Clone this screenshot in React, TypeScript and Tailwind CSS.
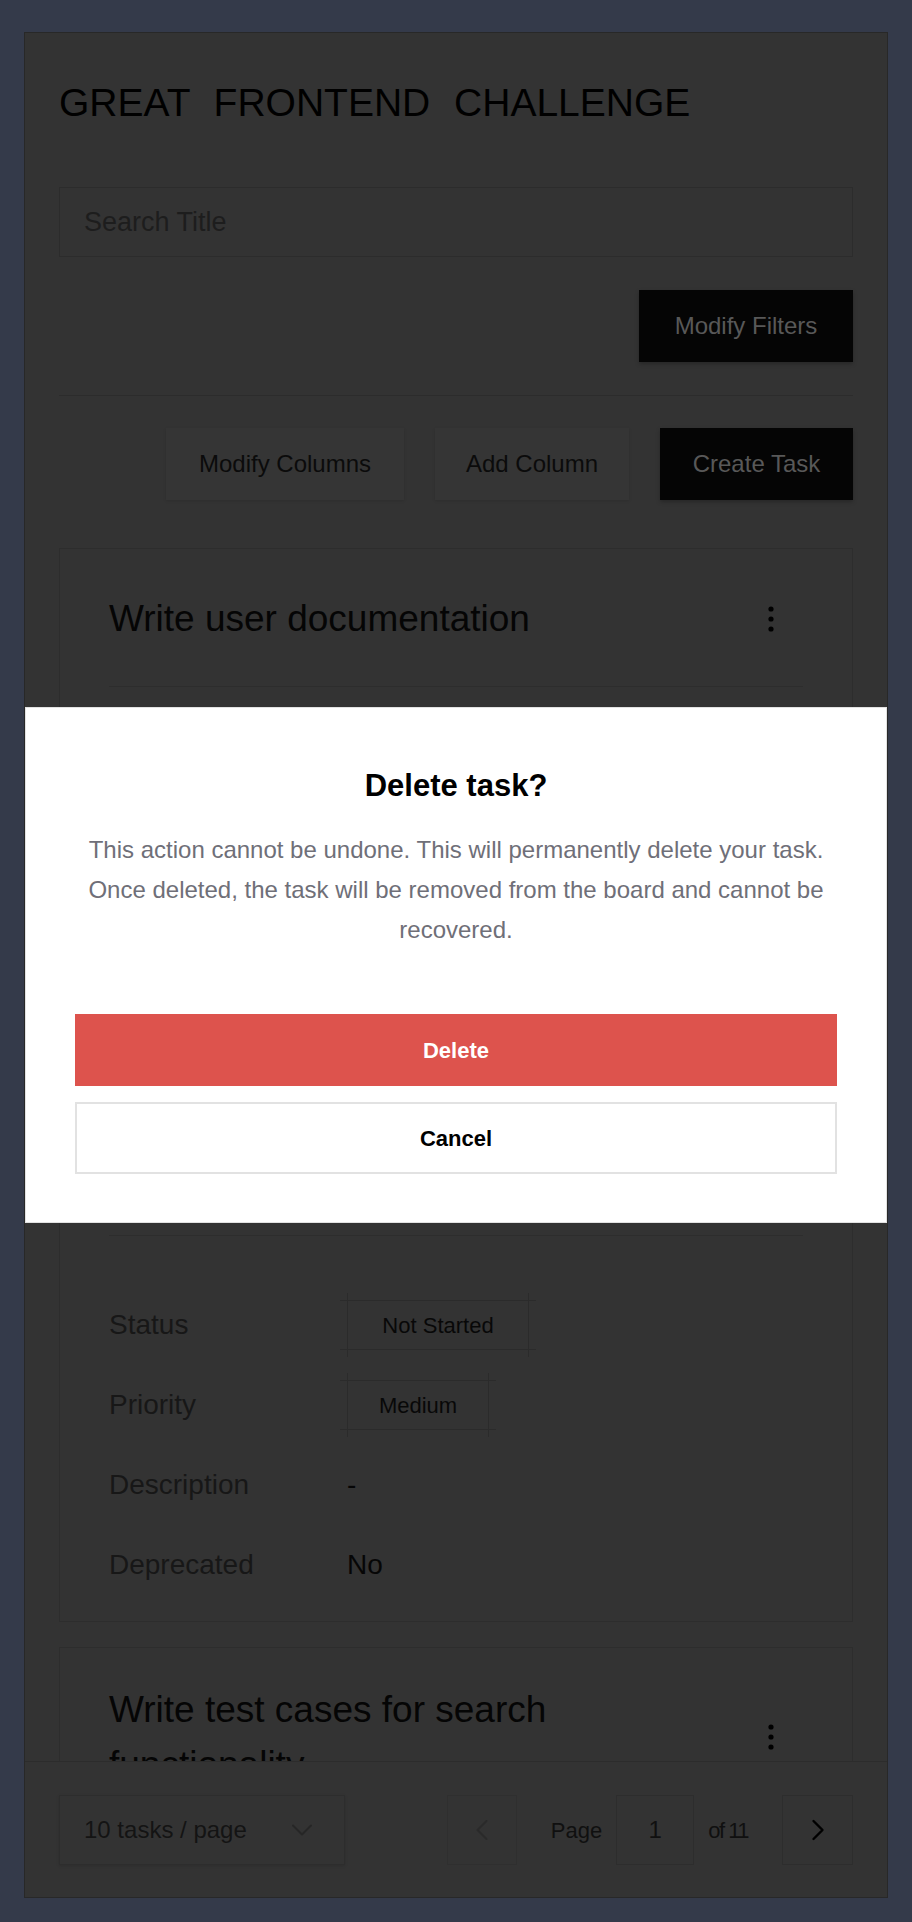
import React from "react";

const FONT = "font-['Liberation_Sans',Arial,sans-serif]";

function Dots() {
  return (
    <svg width="10" height="30" viewBox="0 0 10 30" aria-hidden="true">
      <circle cx="5" cy="5" r="2.6" fill="#000" />
      <circle cx="5" cy="15" r="2.6" fill="#000" />
      <circle cx="5" cy="25" r="2.6" fill="#000" />
    </svg>
  );
}

function Badge({ label, width }: { label: string; width: string }) {
  return (
    <div className={`relative flex h-[50px] items-center justify-center ${width}`}>
      <span className="absolute left-[-7px] right-[-7px] top-0 h-px bg-[#2b2b2b]" />
      <span className="absolute left-[-7px] right-[-7px] bottom-0 h-px bg-[#2b2b2b]" />
      <span className="absolute top-[-7px] bottom-[-7px] left-0 w-px bg-[#2b2b2b]" />
      <span className="absolute top-[-7px] bottom-[-7px] right-0 w-px bg-[#2b2b2b]" />
      <span className="text-[22px] text-[#080808]">{label}</span>
    </div>
  );
}

function Row({ label, children }: { label: string; children: React.ReactNode }) {
  return (
    <div className="flex h-[50px] items-center">
      <div className="w-[238px] text-[28px] text-[#171717]">{label}</div>
      <div className="flex items-center text-[28px] text-[#060606]">{children}</div>
    </div>
  );
}

function TaskHeader({ title }: { title: string }) {
  return (
    <div className="flex min-h-[71px] items-center justify-between gap-4">
      <h2 className="flex-1 text-[37px] leading-[55px] text-[#050505]">{title}</h2>
      <button className="flex h-[71px] w-[64px] shrink-0 items-center justify-center">
        <Dots />
      </button>
    </div>
  );
}

export default function App() {
  return (
    <div className={`min-h-screen bg-[#343a4a] px-6 pt-8 pb-6 ${FONT}`}>
      <div className="relative flex h-[1866px] flex-col overflow-hidden border border-[#282828] bg-[#333333]">
        {/* scrolling content */}
        <div className="flex-1 overflow-hidden px-[34px] pt-[34px]">
          <h1 className="text-[39px] leading-[72px] text-black [word-spacing:13px]">
            GREAT FRONTEND CHALLENGE
          </h1>

          <div className="mt-[48px] flex h-[70px] items-center border border-[#2c2c2c] px-[24px]">
            <span className="text-[27px] text-[#1d1d1d]">Search Title</span>
          </div>

          <div className="mt-[33px] flex justify-end">
            <button className="h-[72px] w-[214px] bg-[#050505] text-[24px] text-[#585858] shadow-[0_2px_4px_rgba(0,0,0,0.25)]">
              Modify Filters
            </button>
          </div>

          <div className="mt-[33px] h-px bg-[#2c2c2c]" />

          <div className="mt-[32px] flex justify-end gap-[31px]">
            <button className="h-[72px] w-[238px] bg-[#353535] text-[24px] text-[#0b0b0b] shadow-[0_1px_3px_rgba(0,0,0,0.12)]">
              Modify Columns
            </button>
            <button className="h-[72px] w-[194px] bg-[#353535] text-[24px] text-[#0b0b0b] shadow-[0_1px_3px_rgba(0,0,0,0.12)]">
              Add Column
            </button>
            <button className="h-[72px] w-[193px] bg-[#050505] text-[24px] text-[#585858] shadow-[0_2px_4px_rgba(0,0,0,0.25)]">
              Create Task
            </button>
          </div>

          {/* Task card 1 */}
          <div className="mt-[48px] border border-[#2d2d2d]">
            <div className="px-[49px]">
              <div className="border-b border-[#2d2d2d] pt-[34px] pb-[32px]">
                <TaskHeader title="Write user documentation" />
              </div>
              <div className="h-[549px] border-b border-[#2d2d2d]" />
              <div className="flex flex-col gap-[30px] pt-[64px] pb-[31px]">
                <Row label="Status">
                  <Badge label="Not Started" width="w-[182px]" />
                </Row>
                <Row label="Priority">
                  <Badge label="Medium" width="w-[142px]" />
                </Row>
                <Row label="Description">-</Row>
                <Row label="Deprecated">No</Row>
              </div>
            </div>
          </div>

          {/* Task card 2 */}
          <div className="mt-[25px] border border-[#2d2d2d]">
            <div className="px-[49px]">
              <div className="pt-[34px] pb-[32px]">
                <TaskHeader title="Write test cases for search functionality" />
              </div>
            </div>
          </div>
        </div>

        {/* footer */}
        <div className="relative z-10 flex items-center justify-between border-t border-[#2c2c2c] bg-[#333333] px-[34px] pt-[33px] pb-[32px]">
          <div className="flex h-[70px] w-[286px] items-center justify-between border border-[#2d2d2d] pl-[24px] pr-[24px] shadow-[0_1px_3px_rgba(0,0,0,0.12)]">
            <span className="text-[24px] text-[#141414]">10 tasks / page</span>
            <svg width="36" height="36" viewBox="0 0 24 24" fill="none" stroke="#262626" strokeWidth="1.3" strokeLinecap="round" strokeLinejoin="round">
              <path d="m6 9 6 6 6-6" />
            </svg>
          </div>
          <div className="flex items-center">
            <div className="flex h-[70px] w-[70px] items-center justify-center border border-[#2f2f2f]">
              <svg width="36" height="36" viewBox="0 0 24 24" fill="none" stroke="#2a2a2a" strokeWidth="1.4" strokeLinecap="round" strokeLinejoin="round">
                <path d="m15 18-6-6 6-6" />
              </svg>
            </div>
            <span className="ml-[34px] text-[22px] text-[#101010]">Page</span>
            <div className="ml-[14px] flex h-[70px] w-[78px] items-center justify-center border border-[#2d2d2d] text-[24px] text-[#101010]">
              1
            </div>
            <span className="ml-[14px] text-[22px] tracking-[-1.5px] text-[#101010]">of 11</span>
            <div className="ml-[34px] flex h-[70px] w-[71px] items-center justify-center border border-[#2d2d2d]">
              <svg width="36" height="36" viewBox="0 0 24 24" fill="none" stroke="#000" strokeWidth="1.6" strokeLinecap="round" strokeLinejoin="round">
                <path d="m9 18 6-6-6-6" />
              </svg>
            </div>
          </div>
        </div>

        {/* modal overlay */}
        <div className="absolute inset-0 z-20 flex items-center justify-center">
          <div className="w-full border border-[#e2e2e2] bg-white px-[49px] pt-[58px] pb-[48px] text-center">
            <h3 className="text-[31px] font-bold leading-[40px] text-black">Delete task?</h3>
            <p className="mt-[24px] text-[24px] leading-[40px] text-[#6f6f78]">
              This action cannot be undone. This will permanently delete your task. Once deleted, the task will be removed from the board and cannot be recovered.
            </p>
            <button className="mt-[64px] h-[72px] w-full bg-[#dd534d] text-[22px] font-bold text-white">
              Delete
            </button>
            <button className="mt-[16px] h-[72px] w-full border-2 border-[#e2e2e2] bg-white text-[22px] font-bold text-black">
              Cancel
            </button>
          </div>
        </div>
      </div>
    </div>
  );
}
